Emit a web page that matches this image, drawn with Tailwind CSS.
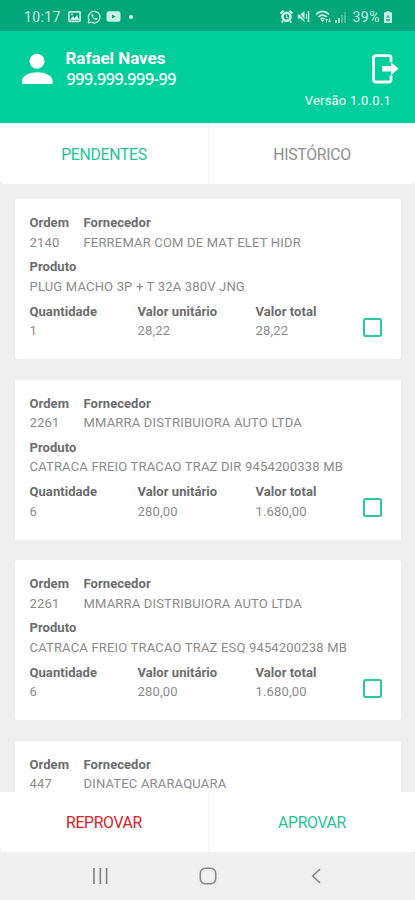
<!DOCTYPE html>
<html lang="pt-BR">
<head>
<meta charset="utf-8">
<meta name="viewport" content="width=device-width, initial-scale=1">
<title>Pendentes</title>
<script src="https://cdn.jsdelivr.net/npm/@tailwindcss/browser@4"></script>
</head>
<body class="bg-[#efefef]">
<div class="flex h-[900px] w-[415px] flex-col overflow-hidden bg-[#efefef] font-['Roboto',sans-serif]">
  <div class="flex h-[31px] shrink-0 items-center bg-[#03a57b] pt-[2px] pr-[23px] pl-6 text-[#c9f2e5]">
    <span class="w-11 text-[14px] leading-none tracking-[0.4px]">10:17</span>
    <svg class="h-[13px] w-[13px]" viewBox="0 0 13 13"><rect x=".8" y="1.8" width="11.4" height="9.6" rx="1.2" fill="none" stroke="currentColor" stroke-width="1.7"/><path d="M2 10l3-3.7 1.7 1.8L9 5.2l2.4 4.8z" fill="currentColor"/><circle cx="4" cy="4.5" r="1" fill="currentColor"/></svg>
    <svg class="ml-[6px] h-[14px] w-[14px]" viewBox="0 0 24 24"><path d="M2 22l1.4-5.2A10 10 0 1 1 7 20.7z" fill="none" stroke="currentColor" stroke-width="2.2" stroke-linejoin="round"/><path d="M8.7 6.5c-1.6.9-1.6 3 .3 5.700s4.700 5.100 7 4.800c1.300-.3 2.100-1.300 1.800-2.400l-2.500-1.300-1.300 1.400c-1.600-.5-2.900-1.700-3.700-3.300l1-1.300-1-2.900z" fill="currentColor"/></svg>
    <svg class="ml-[5px] h-[11px] w-[15px]" viewBox="0 0 15 11"><path fill-rule="evenodd" d="M3 .3h9a2.500 2.500 0 0 1 2.500 2.500v5.400A2.500 2.500 0 0 1 12 10.700H3A2.500 2.500 0 0 1 .5 8.200V2.800A2.500 2.500 0 0 1 3 .3zM6 3.400v4.200l3.700-2.100z" fill="currentColor"/></svg>
    <span class="ml-[8px] h-1 w-1 rounded-full bg-[#e4fff6]"></span>
    <svg class="ml-auto h-[13px] w-[13px]" viewBox="0 0 13 13"><path d="M.5 3.500L3.500.8M12.500 3.500L9.500.8M3 11l-1.300 1.500M10 11l1.300 1.500" stroke="currentColor" stroke-width="2"/><circle cx="6.500" cy="6.800" r="4" fill="none" stroke="currentColor" stroke-width="2.600"/><path d="M6.500 4.500V7l1.700 1" fill="none" stroke="currentColor" stroke-width="1.100"/></svg>
    <svg class="ml-[4px] h-[13px] w-[13px]" viewBox="0 0 13 13"><path d="M.8 4.600h2.500L7.500 1v11L3.300 8.500H.8z" fill="currentColor"/><path d="M.5 1l8.500 10.500" stroke="#03a57b" stroke-width="1"/><path d="M11.500 1v11" stroke="currentColor" stroke-width="1.600"/><path d="M9.300 4v5" stroke="currentColor" stroke-width="1"/></svg>
    <svg class="ml-[5px] h-[13px] w-[17px]" viewBox="0 0 17 13"><g fill="none" stroke="currentColor" stroke-width="1.700"><path d="M1 4.300q6.500-5.800 13 0"/><path d="M3.300 6.900q4.200-3.700 8.400 0"/><path d="M5.500 9.200q2-1.700 4 0"/></g><path d="M7.500 12l-1.700-2h3.400z" fill="currentColor"/><path d="M11.500 12.500V9M10.300 10.200l1.200-1.300 1.200 1.300M14.500 8.500v3.500M13.200 10.700l1.300 1.500 1.300-1.500" fill="none" stroke="currentColor"/></svg>
    <svg class="ml-[2px] h-[12px] w-[12px]" viewBox="0 0 12 12"><path d="M1 9h2v3H1zM4 7h2v5H4z" fill="currentColor" opacity=".8"/><path d="M7 4h2v8H7zM10 1h2v11h-2z" fill="currentColor" opacity=".35"/></svg>
    <span class="ml-[7px] text-[14px] leading-none tracking-[0.5px]">39%</span>
    <svg class="ml-[4px] h-[13px] w-[8px]" viewBox="0 0 8 13"><path d="M2.500 1h3v1.300H7c.6 0 1 .4 1 1V12c0 .6-.4 1-1 1H1c-.6 0-1-.4-1-1V3.300c0-.6.400-1 1-1h1.500z" fill="currentColor"/><path d="M4 4.500L2 7.800h4zM2 9h4v2.200H2z" fill="#03a57b" opacity=".7"/></svg>
  </div>

  <header class="flex h-[92px] shrink-0 bg-[#00cf9b] text-white">
    <svg class="mt-[22px] ml-[22px] h-[31px] w-[31px]" viewBox="0 0 31 31"><circle cx="15" cy="8.200" r="7.500" fill="currentColor"/><path d="M0 31v-3.500C0 22.500 8 19.200 15.300 19.200S30.500 22.500 30.500 27.500V31z" fill="currentColor"/></svg>
    <div class="ml-[12.500px] pt-[17px]">
      <div class="text-[17px] leading-[21px] font-bold tracking-[-0.05px]">Rafael Naves</div>
      <div class="pl-px text-[16px] leading-[20px] font-medium tracking-[-0.35px] font-['Noto_Sans',sans-serif]">999.999.999-99</div>
    </div>
    <div class="ml-auto flex flex-col items-end">
      <svg class="mt-[23px] mr-[16px] h-[30px] w-[28px]" viewBox="0 0 28 30"><path d="M20 8V4a2.300 2.300 0 0 0-2.300-2.300H5A2.500 2.500 0 0 0 2.500 4.200v21.300A2.500 2.500 0 0 0 5 28h12.700a2.300 2.300 0 0 0 2.300-2.300V21.500" fill="none" stroke="currentColor" stroke-width="2.800"/><path d="M11 12h9V8.300l7.500 6.500-7.500 6.500v-3.700h-9z" fill="currentColor"/></svg>
      <div class="mt-[8px] mr-[24px] text-[13px] leading-[18px] tracking-[0.22px]">Versão 1.0.0.1</div>
    </div>
  </header>

  <nav class="flex h-[61px] shrink-0 items-center rounded-b-sm bg-white text-[15.800px] tracking-[-0.300px]">
    <button class="h-full w-[209px] border-r border-[#f5f5f5] pt-[2px] text-[#1fc596]">PENDENTES</button>
    <button class="h-full flex-1 pt-[2px] text-[#8e8e8e]">HISTÓRICO</button>
  </nav>

  <main id="orders" class="flex min-h-0 flex-1 flex-col gap-[20.600px] overflow-hidden px-[14.500px] pt-[15px]"></main>

  <footer class="flex h-[60px] shrink-0 items-center rounded-b-sm bg-white text-[15.800px] tracking-[-0.350px]">
    <button class="h-full w-[209px] border-r border-[#f5f5f5] pt-[2px] text-[#dc2027]">REPROVAR</button>
    <button class="h-full flex-1 pt-[2px] text-[#1fc596]">APROVAR</button>
  </footer>
  <div class="flex h-[48px] shrink-0 items-center bg-[#f0f0f0] text-[#858585]">
    <svg class="ml-[92px] h-[16px] w-[16px]" viewBox="0 0 16 16"><path d="M2 0v16M8.300 0v16M14.600 0v16" stroke="currentColor" stroke-width="1.700"/></svg>
    <svg class="ml-[91px] h-[18px] w-[18px]" viewBox="0 0 18 18"><rect x="1.300" y="1.300" width="15.400" height="15.400" rx="5" fill="none" stroke="currentColor" stroke-width="1.600"/></svg>
    <svg class="ml-[94px] h-[16px] w-[10px]" viewBox="0 0 10 16"><path d="M9 1L1.800 8 9 15" fill="none" stroke="currentColor" stroke-width="1.600"/></svg>
  </div>
</div>

<template id="card">
  <article class="h-[160px] shrink-0 rounded-[2px] bg-white px-[15px] pt-[14px] text-[13px] leading-[19.500px] tracking-[0.180px] text-[#8b8b8b]">
    <div class="flex">
      <div class="w-[54px]"><div class="font-bold tracking-[0.060px] text-[#6c6c6c]">Ordem</div><div data-f="0"></div></div>
      <div><div class="font-bold tracking-[0.060px] text-[#6c6c6c]">Fornecedor</div><div data-f="1"></div></div>
    </div>
    <div data-detail>
      <div class="mt-[5px]"><div class="font-bold tracking-[0.060px] text-[#6c6c6c]">Produto</div><div class="whitespace-nowrap" data-f="2"></div></div>
      <div class="mt-[5.500px] flex">
        <div class="w-[108px]"><div class="font-bold tracking-[0.060px] text-[#6c6c6c]">Quantidade</div><div data-f="3"></div></div>
        <div class="w-[118px]"><div class="font-bold tracking-[0.060px] text-[#6c6c6c]">Valor unitário</div><div data-f="4"></div></div>
        <div class="flex-1"><div class="font-bold tracking-[0.060px] text-[#6c6c6c]">Valor total</div><div data-f="5"></div></div>
        <div class="mt-[16px] mr-[4px] h-[19px] w-[19px] rounded-[2.500px] border-2 border-[#2cc99c]"></div>
      </div>
    </div>
  </article>
</template>
<script>
const orders = [
  ["2140", "FERREMAR COM DE MAT ELET HIDR", "PLUG MACHO 3P + T 32A 380V JNG", "1", "28,22", "28,22"],
  ["2261", "MMARRA DISTRIBUIORA AUTO LTDA", "CATRACA FREIO TRACAO TRAZ DIR 9454200338 MB", "6", "280,00", "1.680,00"],
  ["2261", "MMARRA DISTRIBUIORA AUTO LTDA", "CATRACA FREIO TRACAO TRAZ ESQ 9454200238 MB", "6", "280,00", "1.680,00"],
  ["447", "DINATEC ARARAQUARA"]
];
for (const o of orders) {
  const c = document.getElementById("card").content.cloneNode(true);
  if (o.length < 3) c.querySelector("[data-detail]").remove();
  c.querySelectorAll("[data-f]").forEach(e => e.textContent = o[e.dataset.f]);
  document.getElementById("orders").append(c);
}
</script>
</body>
</html>
